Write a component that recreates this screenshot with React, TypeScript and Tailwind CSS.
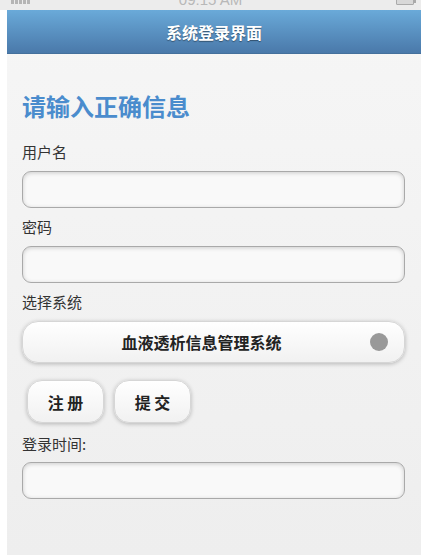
import React from "react";

const cjk = { fontFamily: '"Noto Sans CJK SC", "Noto Sans", sans-serif' };

function Field() {
  return (
    <div className="h-[37px] w-full rounded-[9px] border border-[#a9a9a9] bg-[#f9f9f9] shadow-[inset_0_1px_4px_rgba(0,0,0,0.18)]" />
  );
}

function Label({ children }: { children: React.ReactNode }) {
  return <div className="text-[15px] leading-[22px] text-[#333]">{children}</div>;
}

export default function App() {
  return (
    <div className="relative h-[555px] w-[428px] overflow-hidden bg-white" style={cjk}>
      {/* status bar */}
      <div className="relative h-[10px] w-[421px] overflow-hidden bg-[#ececec]">
        <div className="absolute left-[11px] top-0 flex gap-[1px]">
          {[0, 1, 2, 3, 4].map((i) => (
            <div key={i} className="h-[4px] w-[3px] bg-[#b5b5b5]" />
          ))}
        </div>
        <div
          className="absolute left-0 right-0 top-[-9px] text-center text-[15px] leading-[18px] text-[#b8b8b8]"
          style={{ fontFamily: '"Liberation Sans", sans-serif' }}
        >
          09:15 AM
        </div>
        <div className="absolute left-[396px] top-[-4px] h-[9px] w-[18px] rounded-[1px] border border-[#aaa] bg-[#d8d8d8]" />
        <div className="absolute left-[414px] top-[0px] h-[3px] w-[2px] bg-[#aaa]" />
      </div>
      {/* page */}
      <div className="ml-[7px] w-[414px] h-[545px] bg-gradient-to-b from-[#f6f6f6] to-[#eeeeee]">
        <div className="flex h-[44px] items-center justify-center border-b border-[#44709c] bg-gradient-to-b from-[#6aaad9] to-[#4a79aa]">
          <span className="text-[16px] font-bold text-white [text-shadow:0_1px_1px_rgba(0,0,0,0.4)]">
            系统登录界面
          </span>
        </div>
        <div className="px-[15px] pr-[16px] pt-[37px]">
          <h1 className="text-[24px] font-bold leading-[30px] text-[#4a8ccd]">请输入正确信息</h1>
          <div className="mt-[20px]">
            <Label>用户名</Label>
            <div className="mt-[8px]">
              <Field />
            </div>
          </div>
          <div className="mt-[8px]">
            <Label>密码</Label>
            <div className="mt-[8px]">
              <Field />
            </div>
          </div>
          <div className="mt-[8px]">
            <Label>选择系统</Label>
            <div className="relative mt-[8px] flex h-[42px] items-center justify-center rounded-[16px] border border-[#d6d6d6] bg-gradient-to-b from-[#ffffff] to-[#f1f1f1] pr-[24px] shadow-[0_1px_4px_rgba(0,0,0,0.25)]">
              <span className="text-[16px] font-bold text-[#222]">血液透析信息管理系统</span>
              <div className="absolute right-[16px] top-1/2 h-[18px] w-[18px] -translate-y-1/2 rounded-full bg-[#999]" />
            </div>
          </div>
          <div className="mt-[17px] flex gap-[10px] pl-[5px]">
            <button className="flex h-[43px] w-[77px] items-center justify-center rounded-[15px] border border-[#d6d6d6] bg-gradient-to-b from-[#ffffff] to-[#f1f1f1] text-[16px] font-bold text-[#222] shadow-[0_1px_4px_rgba(0,0,0,0.25)]">
              注 册
            </button>
            <button className="flex h-[43px] w-[77px] items-center justify-center rounded-[15px] border border-[#d6d6d6] bg-gradient-to-b from-[#ffffff] to-[#f1f1f1] text-[16px] font-bold text-[#222] shadow-[0_1px_4px_rgba(0,0,0,0.25)]">
              提 交
            </button>
          </div>
          <div className="mt-[10px]">
            <Label>登录时间:</Label>
            <div className="mt-[7px]">
              <Field />
            </div>
          </div>
        </div>
      </div>
    </div>
  );
}
